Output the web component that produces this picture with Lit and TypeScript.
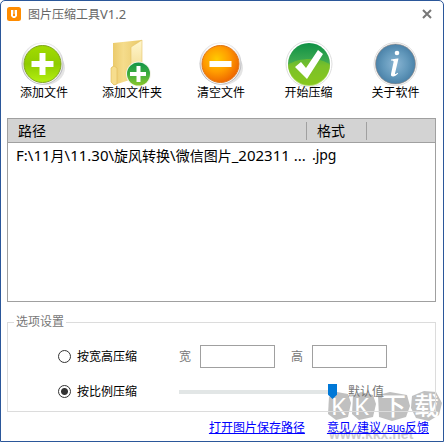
import { LitElement, html, css, svg } from "lit";
import { customElement, state } from "lit/decorators.js";

const addIcon = svg`
  <defs>
    <radialGradient id="rim-a" cx="50%" cy="45%" r="52%"><stop offset=".8" stop-color="#fff"/><stop offset="1" stop-color="#b4b4b8"/></radialGradient>
    <linearGradient id="lime" x1="0" y1="0" x2="0" y2="1"><stop offset="0" stop-color="#a2dc00"/><stop offset=".5" stop-color="#8fcc00"/><stop offset="1" stop-color="#b4f010"/></linearGradient>
  </defs>
  <ellipse cx="25" cy="29" rx="20" ry="17" fill="#e4e4e4"/>
  <circle cx="22.500" cy="24.500" r="21" fill="url(#rim-a)"/>
  <circle cx="22.500" cy="25.500" r="19.500" fill="#f6f6f6"/>
  <circle cx="22.500" cy="25" r="18.500" fill="url(#lime)" stroke="#7fa51c"/>
  <path d="M19.500 14h6v8h8v6h-8v8h-6v-8h-8v-6h8z" fill="#fff"/>`;

const folderIcon = svg`
  <defs>
    <linearGradient id="fold" x1="0" y1="0" x2="1" y2="0"><stop offset="0" stop-color="#e9c765"/><stop offset=".4" stop-color="#f5dc8c"/><stop offset="1" stop-color="#e8c766"/></linearGradient>
    <linearGradient id="flap" x1="0" y1="0" x2="0" y2="1"><stop offset="0" stop-color="#fff7cf"/><stop offset="1" stop-color="#efd27d"/></linearGradient>
    <linearGradient id="green" x1="0" y1="0" x2="0" y2="1"><stop offset="0" stop-color="#119447"/><stop offset=".5" stop-color="#3ead3f"/><stop offset="1" stop-color="#8ac72a"/></linearGradient>
  </defs>
  <path d="M5 4l29-3v36L6 46l-3-3V29l2-2z" fill="url(#fold)"/>
  <path d="M23 8l11-7v36l-11 6z" fill="url(#flap)" stroke="#e5c567" stroke-width=".6"/>
  <path d="M3 29l3-2 3 2v16l-3 1-3-3z" fill="#f6dd8d" stroke="#dfbb58" stroke-width=".6"/>
  <circle cx="30.500" cy="35" r="12.500" fill="#f3f3e8"/>
  <circle cx="30.500" cy="35" r="11.500" fill="url(#green)"/>
  <path d="M28.500 27h4v6h5.500v4h-5.500v6h-4v-6H22v-4h6.500z" fill="#fff"/>`;

const clearIcon = svg`
  <defs>
    <radialGradient id="rim-c" cx="50%" cy="45%" r="52%"><stop offset=".8" stop-color="#fff"/><stop offset="1" stop-color="#b4b4b8"/></radialGradient>
    <radialGradient id="orange" cx="40%" cy="38%" r="68%"><stop offset="0" stop-color="#ffcc00"/><stop offset=".5" stop-color="#ff9c00"/><stop offset="1" stop-color="#ec6000"/></radialGradient>
  </defs>
  <ellipse cx="26" cy="29" rx="20" ry="17" fill="#e4e4e4"/>
  <circle cx="23.500" cy="24.500" r="21" fill="url(#rim-c)"/>
  <circle cx="23.500" cy="25.500" r="19.500" fill="#f8f8f8"/>
  <circle cx="23.500" cy="25" r="18.500" fill="url(#orange)" stroke="#e07414"/>
  <path d="M12.500 22h22v6h-22z" fill="#fff"/>`;

const startIcon = svg`
  <defs>
    <linearGradient id="leaf" x1="0" y1="0" x2="0" y2="1"><stop offset="0" stop-color="#0f9145"/><stop offset=".45" stop-color="#3faa52"/><stop offset=".55" stop-color="#6cb93c"/><stop offset="1" stop-color="#8cc81e"/></linearGradient>
  </defs>
  <circle cx="24" cy="25" r="23" fill="#fff" stroke="#dedede"/>
  <circle cx="24" cy="25" r="21" fill="url(#leaf)"/>
  <path d="M3 26a21 21 0 0 0 42 0C37 18 13 18 3 26z" fill="#86c61c" opacity=".6"/>
  <path d="M10 28l6-5 5 6L33 11l5 4-16 25z" fill="#fff"/>`;

const aboutIcon = svg`
  <defs>
    <radialGradient id="steel" cx="50%" cy="50%" r="52%"><stop offset="0" stop-color="#8ab5d3"/><stop offset=".6" stop-color="#6298bb"/><stop offset="1" stop-color="#487fa6"/></radialGradient>
  </defs>
  <circle cx="23.500" cy="25" r="21.500" fill="#fff" stroke="#dedede"/>
  <circle cx="23.500" cy="25" r="20" fill="url(#steel)" stroke="#a08c80" stroke-width=".6"/>
  <circle cx="25" cy="14" r="2.300" fill="#fff"/>
  <path d="M19 20.500l6.500-1h1L23 34.500c-.1 1 1 .6 2.500-.8l.6.8c-1.800 2.100-3.500 2.900-5 2.900-1.900 0-2.500-1.200-2-3l2.500-11.300c.3-1.200-.6-1.500-2.600-1.600z" fill="#fff"/>`;

const actions = [
  { label: "添加文件", icon: addIcon },
  { label: "添加文件夹", icon: folderIcon },
  { label: "清空文件", icon: clearIcon },
  { label: "开始压缩", icon: startIcon },
  { label: "关于软件", icon: aboutIcon },
];

@customElement("file-list")
export class FileList extends LitElement {
  static styles = css`
    :host { display: block; border: 1px solid #a0a0a0; background: #fff; }
    table { width: 100%; border-collapse: collapse; table-layout: fixed; font-size: 14px; line-height: 22px; }
    .path { width: 70%; }
    .format { width: 14%; }
    thead { background: #d3d3d3; }
    tr { border-bottom: 1px solid #a0a0a0; }
    tbody tr { border: 0; }
    th, td { padding: 0 0 0 8px; font-weight: 400; text-align: left; white-space: nowrap; }
    th { height: 23px; padding-left: 10px; background: linear-gradient(#a0a0a0, #a0a0a0) no-repeat right center / 1px 18px; }
    th.rest { background: none; }
    td { height: 24px; }
    td + td { padding-left: 5px; }
    .latin { font-size: 15px; }
  `;

  private files = [{ path: "F:\\11月\\11.30\\旋风转换\\微信图片_202311 ...", format: ".jpg" }];

  // Latin runs are set one size larger than the Chinese text around them.
  private mixed(text: string) {
    return text
      .split(/([\x20-\x7e]+)/)
      .map((part, i) => (i % 2 ? html`<span class="latin">${part}</span>` : part));
  }

  render() {
    return html`
      <table>
        <colgroup><col class="path"><col class="format"><col></colgroup>
        <thead><tr><th>路径</th><th>格式</th><th class="rest"></th></tr></thead>
        <tbody>
          ${this.files.map((f) => html`<tr><td>${this.mixed(f.path)}</td><td>${f.format}</td><td></td></tr>`)}
        </tbody>
      </table>`;
  }
}

@customElement("app-root")
export class AppRoot extends LitElement {
  static styles = css`
    :host { display: block; font: 12px/16px "Noto Sans", "Noto Sans CJK SC", sans-serif; color: #000; }
    .window { position: relative; isolation: isolate; box-sizing: border-box; min-height: 100vh; display: flex; flex-direction: column; overflow: hidden; background: #fff; border: 1px solid #2b579a; border-radius: 5px 5px 0 0; }
    button { font: inherit; color: inherit; border: 0; padding: 0; background: none; }
    .titlebar { display: flex; align-items: center; gap: 7px; height: 26px; padding: 0 11px 0 6px; color: #666; }
    .logo { display: block; width: 14px; height: 14px; }
    h1 { margin: 0; flex: 1; font-size: 12px; font-weight: 400; }
    .version { font-size: 13px; }
    .close { display: flex; }
    .toolbar { display: grid; grid-template-columns: 86fr 90fr 88fr 87fr 87fr; padding: 12px 4px 0 0; }
    .tool { display: flex; flex-direction: column; align-items: center; }
    .tool svg { display: block; width: 48px; height: 48px; margin-bottom: -2px; }
    file-list { flex: 1; min-height: 120px; margin: 17px 7px 12px 6px; }
    fieldset { display: block; margin: 0 7px 0 6px; padding: 15px 48px 8px 50px; min-width: 0; border: 1px solid #dcdcdc; }
    legend { margin-left: -44px; padding: 0 2px; color: #777; }
    .options { display: grid; grid-template-columns: 121px 1fr; grid-auto-rows: 23px; row-gap: 12px; align-items: center; }
    .choice { display: flex; align-items: center; gap: 6px; }
    .radio { appearance: none; width: 13px; height: 13px; margin: 0; border: 1px solid #333; border-radius: 50%; background: #fff; }
    .radio:checked { background: radial-gradient(circle, #333 3px, #fff 4px); }
    .fields { display: flex; align-items: center; color: #777; }
    .field { display: flex; align-items: center; gap: 9px; margin-right: 16px; }
    .size { box-sizing: border-box; width: 75px; height: 23px; padding: 0 4px; border: 1px solid #a0a0a0; border-radius: 0; font: inherit; background: #fff; }
    .ratio { appearance: none; width: 158px; height: 16px; margin: 0 11px 0 0; background: linear-gradient(#e2e6e6, #e2e6e6) no-repeat center / 100% 4px; }
    .ratio::-webkit-slider-thumb { appearance: none; width: 9px; height: 15px; background: #0078d7; clip-path: polygon(0 0, 100% 0, 100% 72%, 50% 100%, 0 72%); }
    .links { display: flex; justify-content: flex-end; gap: 22px; padding: 8px 14px 3px 0; }
    a { color: #00f; }
    .latin { font: 10px/16px "Liberation Mono", monospace; }
    .watermark { position: absolute; z-index: -1; right: 0; bottom: 0; width: 116px; height: 54px; pointer-events: none; }
    .blob { fill: #c0c0c0; }
    .mark-name { font: 500 25px "Noto Sans CJK SC", sans-serif; fill: #fff; }
    .mark-latin { font: 24px "Noto Sans", sans-serif; fill: #fff; }
    .mark-url { font: bold 14px "Liberation Sans", sans-serif; fill: #ccc; }
  `;

  @state() private mode = "ratio";

  render() {
    return html`
      <main class="window">
        <header class="titlebar">
          <svg class="logo" viewBox="0 0 14 14">
            <rect width="14" height="14" rx="2.500" fill="#ff8c00"/>
            <path d="M4 3h2v6h2V3h2v6l-2 2H6L4 9z" fill="#fff"/>
            <path d="M6.500 3h1v4h-1z" fill="#ffd9a8"/>
          </svg>
          <h1>图片压缩工具<span class="version">V1.2</span></h1>
          <button class="close" aria-label="关闭">
            <svg width="10" height="10" viewBox="0 0 10 10"><path d="M1 1l8 8M9 1L1 9" stroke="#777" stroke-width="2"/></svg>
          </button>
        </header>

        <nav class="toolbar">
          ${actions.map((a) => html`<button class="tool"><svg viewBox="0 0 48 48">${a.icon}</svg><span>${a.label}</span></button>`)}
        </nav>

        <file-list></file-list>

        <fieldset>
          <legend>选项设置</legend>
          <div class="options">
            <label class="choice">
              <input class="radio" type="radio" name="mode" .checked=${this.mode === "size"} @change=${() => (this.mode = "size")}>按宽高压缩
            </label>
            <div class="fields">
              <label class="field">宽<input class="size" type="text"></label>
              <label class="field">高<input class="size" type="text"></label>
            </div>
            <label class="choice">
              <input class="radio" type="radio" name="mode" .checked=${this.mode === "ratio"} @change=${() => (this.mode = "ratio")}>按比例压缩
            </label>
            <div class="fields">
              <input class="ratio" id="ratio" type="range" min="0" max="100" value="100">
              <label for="ratio">默认值</label>
            </div>
          </div>
        </fieldset>

        <footer class="links">
          <a href="#folder">打开图片保存路径</a>
          <a href="#feedback">意见<span class="latin">/</span>建议<span class="latin">/BUG</span>反馈</a>
        </footer>

        <svg class="watermark" viewBox="0 0 116 54">
          <path class="blob" d="M2 10l8-5 11 2 3 9-3 14-12 3-8-6z"/>
          <path class="blob" d="M26 9l8-4 12 3 3 9-3 13-14 3-7-6z"/>
          <path class="blob" d="M51 8l12-3 17 3 3 11-4 11-14 4-13-4z"/>
          <path class="blob" d="M85 9l12-5 12 1 6 11-3 12-10 6-13-3-5-10z"/>
          <text class="mark-latin" x="4" y="28">K</text>
          <text class="mark-latin" x="27" y="28">K</text>
          <text class="mark-name" x="54" y="28">下</text>
          <text class="mark-name" x="87" y="28">载</text>
          <text class="mark-url" x="2" y="52">www.kkx.net</text>
        </svg>
      </main>`;
  }
}
